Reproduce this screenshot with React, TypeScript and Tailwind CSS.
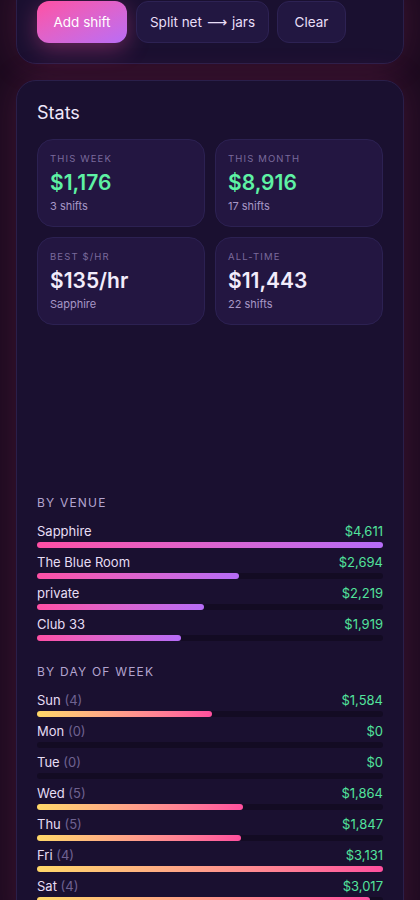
import React from "react";

const venues = [
  { name: "Sapphire", value: 4611 },
  { name: "The Blue Room", value: 2694 },
  { name: "private", value: 2219 },
  { name: "Club 33", value: 1919 },
];

const days = [
  { name: "Sun", count: 4, value: 1584 },
  { name: "Mon", count: 0, value: 0 },
  { name: "Tue", count: 0, value: 0 },
  { name: "Wed", count: 5, value: 1864 },
  { name: "Thu", count: 5, value: 1847 },
  { name: "Fri", count: 4, value: 3131 },
  { name: "Sat", count: 4, value: 3017 },
];

const fmt = (n: number) => "$" + n.toLocaleString("en-US");

function StatCard({ label, value, sub, green }: { label: string; value: string; sub: string; green?: boolean }) {
  return (
    <div className="rounded-2xl border border-[#2c2152] bg-[#231641] p-3">
      <div className="text-[9.5px] leading-[14px] tracking-[0.12em] text-[#7a6a9c]">{label}</div>
      <div className={`mt-1 text-[21px] font-semibold leading-[26px] ${green ? "text-[#5ef2a4]" : "text-[#f2ecfb]"}`}>{value}</div>
      <div className="mt-[2px] text-[11px] leading-4 text-[#a797c6]">{sub}</div>
    </div>
  );
}

function Bar({ pct, kind }: { pct: number; kind: "venue" | "day" }) {
  return (
    <div className="mt-[2px] mb-[5px] h-[6px] w-full rounded-full bg-[#130b23]">
      <div
        className={`h-full rounded-full ${kind === "venue" ? "bg-gradient-to-r from-[#ff4fa5] to-[#b66cf7]" : "bg-gradient-to-r from-[#ffd768] to-[#ff4f9e]"}`}
        style={{ width: `${pct}%` }}
      />
    </div>
  );
}

export default function App() {
  const vmax = Math.max(...venues.map((v) => v.value));
  const dmax = Math.max(...days.map((d) => d.value));
  return (
    <div
      className="min-h-[900px] w-full overflow-hidden bg-[#1c0b1f] px-4 pb-10"
      style={{ fontFamily: "Inter, 'Noto Sans', sans-serif" }}
    >
      <div className="-mt-5 rounded-[20px] border border-[#2a1f4a] bg-[#1a1030] p-5 shadow-[0_0_34px_rgba(236,60,150,0.16)]">
        <div className="flex gap-2">
          <button className="flex h-[42px] w-[90px] items-center justify-center rounded-xl bg-gradient-to-br from-[#ff4fa3] to-[#b96cf6] text-[13.5px] text-white shadow-[0_6px_22px_rgba(255,79,163,0.35)]">
            Add shift
          </button>
          <button className="ml-px flex h-[42px] w-[133px] items-center justify-center gap-[5px] rounded-xl border border-[#2d2253] bg-[#221741] text-[13.5px] text-[#e8def7]">
            <span>Split net</span>
            <span className="text-[14px] leading-none" style={{ fontFamily: "'DejaVu Sans', sans-serif" }}>⟶</span>
            <span>jars</span>
          </button>
          <button className="flex h-[42px] w-[69px] items-center justify-center rounded-xl border border-[#2d2253] bg-[#221741] text-[13.5px] text-[#e8def7]">
            Clear
          </button>
        </div>
      </div>

      <div className="mt-4 rounded-[20px] border border-[#2a1f4a] bg-[#1a1030] p-5 shadow-[0_0_34px_rgba(236,60,150,0.16)]">
        <h2 className="text-[18px] leading-6 text-[#efe8fa]">Stats</h2>
        <div className="mt-[14px] grid grid-cols-2 gap-[10px]">
          <StatCard label="THIS WEEK" value="$1,176" sub="3 shifts" green />
          <StatCard label="THIS MONTH" value="$8,916" sub="17 shifts" green />
          <StatCard label="BEST $/HR" value="$135/hr" sub="Sapphire" />
          <StatCard label="ALL-TIME" value="$11,443" sub="22 shifts" />
        </div>

        <div className="h-[170px]" />

        <div className="text-[12px] leading-4 tracking-[0.1em] text-[#b3a4cf]">BY VENUE</div>
        <div className="mt-[11px]">
          {venues.map((v) => (
            <div key={v.name}>
              <div className="flex justify-between text-[13px] leading-[18px]">
                <span className="text-[#e6ddf4]">{v.name}</span>
                <span className="text-[#52e39c]">{fmt(v.value)}</span>
              </div>
              <Bar pct={(v.value / vmax) * 100} kind="venue" />
            </div>
          ))}
        </div>

        <div className="mt-[23px] text-[12px] leading-4 tracking-[0.1em] text-[#b3a4cf]">BY DAY OF WEEK</div>
        <div className="mt-[11px]">
          {days.map((d) => (
            <div key={d.name}>
              <div className="flex justify-between text-[13px] leading-[18px]">
                <span className="text-[#e6ddf4]">
                  {d.name} <span className="text-[#6f6290]">({d.count})</span>
                </span>
                <span className="text-[#52e39c]">{fmt(d.value)}</span>
              </div>
              <Bar pct={(d.value / dmax) * 100} kind="day" />
            </div>
          ))}
        </div>
      </div>
    </div>
  );
}
